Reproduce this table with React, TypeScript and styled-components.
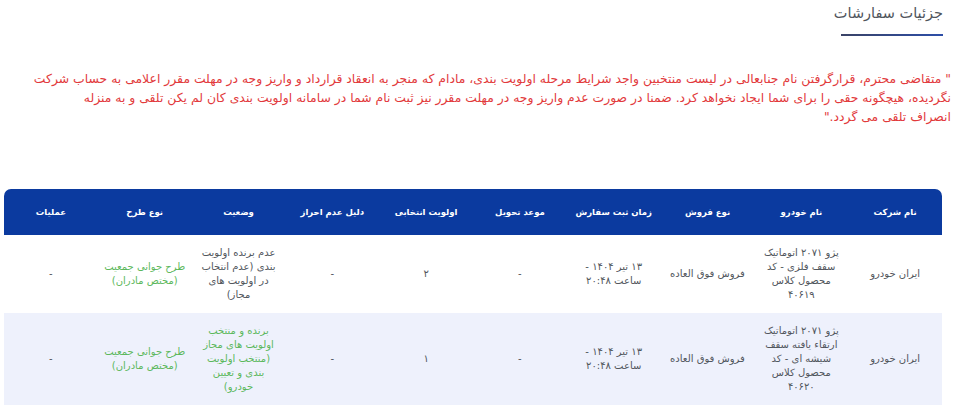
import React from "react";
import styled, { createGlobalStyle } from "styled-components";

const GlobalStyle = createGlobalStyle`
  html, body { margin: 0; padding: 0; background: #ffffff; }
  body { font-family: "DejaVu Sans", "Noto Sans", sans-serif; }
  * { box-sizing: border-box; }
`;

const Page = styled.div`
  direction: rtl;
  width: 958px;
  height: 410px;
  overflow: hidden;
  background: #ffffff;
  display: flex;
  flex-direction: column;
`;

const TitleBlock = styled.div`
  display: flex;
  flex-direction: column;
  align-items: flex-start;
  padding: 2px 15px 0 0;
`;

const Title = styled.h2`
  margin: 0;
  font-size: 14.5px;
  line-height: 22px;
  font-weight: normal;
  color: #50555c;
`;

const Underline = styled.div`
  margin-top: 10px;
  width: 102px;
  height: 2px;
  background: linear-gradient(to left, #2d4ea8, #3a4366);
`;

const Notice = styled.p`
  margin: 33px 7px 0 7px;
  font-size: 12.4px;
  line-height: 19px;
  color: #e23a3c;
  text-align: right;
`;

const NoticeLine = styled.span`
  display: block;
  white-space: nowrap;
`;

const TableWrap = styled.div`
  margin: 63px 16px 0 4px;
`;

const Table = styled.table`
  width: 100%;
  table-layout: fixed;
  border-collapse: separate;
  border-spacing: 0;
`;

const HeadCell = styled.th`
  height: 46px;
  background: #0b3a9f;
  color: #ffffff;
  font-size: 8.5px;
  font-weight: bold;
  text-align: center;
  padding: 0 4px;
  &:first-child { border-top-right-radius: 7px; }
  &:last-child { border-top-left-radius: 7px; }
`;

const Row = styled.tr<{ $alt?: boolean }>`
  background: ${(p) => (p.$alt ? "#eef1fc" : "#ffffff")};
`;

const Cell = styled.td<{ $tone?: "green" | "dark"; $pad?: number }>`
  text-align: center;
  vertical-align: middle;
  padding: 11px ${(p) => p.$pad ?? 8}px;
  font-size: 10px;
  line-height: 14px;
  color: ${(p) => (p.$tone === "green" ? "#5cb85c" : "#51565c")};
`;

const Line = styled.span`
  display: block;
  white-space: nowrap;
`;

const headers = [
  "نام شرکت",
  "نام خودرو",
  "نوع فروش",
  "زمان ثبت سفارش",
  "موعد تحویل",
  "اولویت انتخابی",
  "دلیل عدم احراز",
  "وضعیت",
  "نوع طرح",
  "عملیات",
];

const noticeLines = [
  "\" متقاضی محترم، قرارگرفتن نام جنابعالی در لیست منتخبین واجد شرایط مرحله اولویت بندی، مادام که منجر به انعقاد قرارداد و واریز وجه در مهلت مقرر اعلامی به حساب شرکت",
  "نگردیده، هیچگونه حقی را برای شما ایجاد نخواهد کرد. ضمنا در صورت عدم واریز وجه در مهلت مقرر نیز ثبت نام شما در سامانه اولویت بندی کان لم یکن تلقی و به منزله",
  "انصراف تلقی می گردد.\"",
];

type Order = {
  company: string;
  car: string;
  sale: string;
  time: string;
  delivery: string;
  priority: string;
  reason: string;
  status: string;
  statusWin: boolean;
  plan: [string, string];
  ops: string;
};

const orders: Order[] = [
  {
    company: "ایران خودرو",
    car: "پژو ۲۰۷۱ اتوماتیک سقف فلزی - کد محصول کلاس ۴۰۶۱۹",
    sale: "فروش فوق العاده",
    time: "۱۳ تیر ۱۴۰۴ - ساعت ۲۰:۴۸",
    delivery: "-",
    priority: "۲",
    reason: "-",
    status: "عدم برنده اولویت بندی (عدم انتخاب در اولویت های مجاز)",
    statusWin: false,
    plan: ["طرح جوانی جمعیت", "(مختص مادران)"],
    ops: "-",
  },
  {
    company: "ایران خودرو",
    car: "پژو ۲۰۷۱ اتوماتیک ارتقاء یافته سقف شیشه ای - کد محصول کلاس ۴۰۶۲۰",
    sale: "فروش فوق العاده",
    time: "۱۳ تیر ۱۴۰۴ - ساعت ۲۰:۴۸",
    delivery: "-",
    priority: "۱",
    reason: "-",
    status: "برنده و منتخب اولویت های مجاز (منتخب اولویت بندی و تعیین خودرو)",
    statusWin: true,
    plan: ["طرح جوانی جمعیت", "(مختص مادران)"],
    ops: "-",
  },
];

export default function App() {
  return (
    <>
      <GlobalStyle />
      <Page>
        <TitleBlock>
          <Title>جزئیات سفارشات</Title>
          <Underline />
        </TitleBlock>
        <Notice>
          {noticeLines.map((l, i) => (
            <NoticeLine key={i}>{l}</NoticeLine>
          ))}
        </Notice>
        <TableWrap>
          <Table>
            <thead>
              <tr>
                {headers.map((h) => (
                  <HeadCell key={h}>{h}</HeadCell>
                ))}
              </tr>
            </thead>
            <tbody>
              {orders.map((o, i) => (
                <Row key={i} $alt={i % 2 === 1}>
                  <Cell>{o.company}</Cell>
                  <Cell>{o.car}</Cell>
                  <Cell $pad={4}>{o.sale}</Cell>
                  <Cell>{o.time}</Cell>
                  <Cell>{o.delivery}</Cell>
                  <Cell>{o.priority}</Cell>
                  <Cell>{o.reason}</Cell>
                  <Cell $tone={o.statusWin ? "green" : "dark"}>{o.status}</Cell>
                  <Cell $tone="green" $pad={2}>
                    <Line>{o.plan[0]}</Line>
                    <Line>{o.plan[1]}</Line>
                  </Cell>
                  <Cell>{o.ops}</Cell>
                </Row>
              ))}
            </tbody>
          </Table>
        </TableWrap>
      </Page>
    </>
  );
}
